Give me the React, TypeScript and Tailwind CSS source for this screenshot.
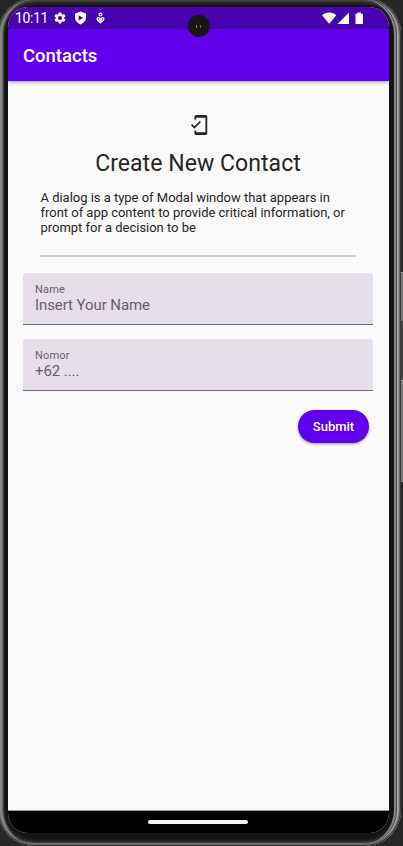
import React from "react";

function StatusBar() {
  return (
    <div className="flex h-[22px] shrink-0 items-center bg-[#4800b0] pl-[7px] pr-[25px] text-white">
      <span className="w-[33px] whitespace-nowrap text-[14px] leading-[22px] tracking-[-0.35px]">10:11</span>
      <svg className="ml-[5px]" width="14" height="14" viewBox="0 0 24 24" fill="currentColor">
        <path d="M19.14 12.94c.04-.3.06-.61.06-.94 0-.32-.02-.64-.07-.94l2.03-1.58a.49.49 0 0 0 .12-.61l-1.92-3.32a.49.49 0 0 0-.59-.22l-2.39.96c-.5-.38-1.03-.7-1.62-.94l-.36-2.54a.48.48 0 0 0-.48-.41h-3.84a.48.48 0 0 0-.47.41l-.36 2.54c-.59.24-1.13.57-1.62.94l-2.39-.96a.48.48 0 0 0-.59.22L2.74 8.87a.48.48 0 0 0 .12.61l2.03 1.58c-.05.3-.09.63-.09.94s.02.64.07.94l-2.03 1.58a.49.49 0 0 0-.12.61l1.92 3.32c.12.22.37.29.59.22l2.39-.96c.5.38 1.03.7 1.62.94l.36 2.54c.05.24.24.41.48.41h3.84c.24 0 .44-.17.47-.41l.36-2.54c.59-.24 1.13-.56 1.62-.94l2.39.96c.22.08.47 0 .59-.22l1.92-3.32a.48.48 0 0 0-.12-.61zM12 15.6A3.6 3.6 0 1 1 12 8.400a3.6 3.6 0 0 1 0 7.200z" />
      </svg>
      <svg className="ml-[7px]" width="13" height="14" viewBox="0 0 13 14">
        <path d="M6.500.5 12 2.600v4c0 3.300-2.400 5.800-5.500 6.900C3.400 12.400 1 9.900 1 6.600v-4z" fill="currentColor" />
        <path d="M4.600 4.300v5.200l4.500-2.600z" fill="#4800b0" />
      </svg>
      <svg className="ml-[9px]" width="9" height="12" viewBox="0 0 9 12" fill="none" stroke="currentColor" strokeWidth="1.2">
        <circle cx="4.500" cy="2.600" r="1.400" />
        <path d="M4.500 7C3.500 5.700 2.200 5.200 1.200 6.200c-.9 1.500 1 2.900 3.300 4.600 2.300-1.700 4.200-3.100 3.300-4.600C6.800 5.200 5.500 5.700 4.500 7zM2.700 7l1.800 1.800L6.300 7" />
      </svg>
      <svg className="ml-auto" width="42" height="13" viewBox="0 0 42 13" fill="currentColor">
        <path d="M0 3.200C4-.3 10.400-.3 14.300 3.200L7.200 11.800z" />
        <path d="M27 .500v11.500H15.500z" />
        <path d="M35.300.500h3.600v1.200h2v10.300h-7.400V1.700h1.800z" />
      </svg>
    </div>
  );
}

function FilledField({ label, value }: { label: string; value: string }) {
  return (
    <div className="flex h-[52px] flex-col rounded-t-[4px] border-b border-[#716b76] bg-[#e6deeb] pl-[12px] pt-[10px] text-[#66606a]">
      <span className="text-[11px] leading-[13px] tracking-[0.15px]">{label}</span>
      <span className="text-[15px] leading-[18px] tracking-[-0.08px]">{value}</span>
    </div>
  );
}

export default function App() {
  return (
    <div className="relative h-[846px] w-[403px] overflow-hidden bg-[#262626] font-[Roboto,sans-serif]">
      <div className="absolute left-[401px] top-[272px] h-[49px] w-[2px] border-t border-[#aaaaaa] bg-[#777777]" />
      <div className="absolute left-[401px] top-[321px] h-[59px] w-[2px] bg-[#444444]" />
      <div className="absolute left-[401px] top-[380px] h-[102px] w-[2px] border-t border-[#aaaaaa] bg-[#777777]" />
      <div className="-ml-[2px] -mt-[2px] h-[848px] w-[403px] rounded-[36px] bg-[#141414] pl-[10px] pr-[12px] pt-[9px] shadow-[inset_0_0_0_1px_#3a3a3a,inset_0_0_0_2px_#666666,inset_-3px_0_0_0_#999999,inset_-4px_0_0_0_#a6a6a6,inset_-5px_0_0_0_#484848,inset_-7px_0_0_0_#858585,inset_4px_0_0_0_#888888,inset_5px_0_0_0_#666666,inset_6px_0_0_0_#444444,inset_0_-3px_0_0_#707070,inset_0_0_5px_3px_#666666]">
        <div className="flex h-[826px] w-[381px] flex-col overflow-hidden rounded-[20px] bg-[#fafafa]">
          <StatusBar />
          <header className="relative z-10 flex h-[52px] shrink-0 items-center bg-[#6200ee] pl-[15px] pt-[2px] text-white shadow-[0_1px_4px_rgba(0,0,0,0.4)]">
            <h1 className="text-[18.5px] font-medium leading-[28px]">Contacts</h1>
          </header>
          <main className="flex flex-1 flex-col pl-[15px] pr-[16px] text-[#262626]">
            <svg className="ml-[164.5px] mt-[33px] shrink-0" width="22" height="22" viewBox="0 0 24 24" fill="currentColor">
              <path d="M19 1H9c-1.100 0-2 .9-2 2v3h2V4h10v16H9v-2H7v3c0 1.100.9 2 2 2h10c1.100 0 2-.9 2-2V3c0-1.100-.9-2-2-2zM7.010 13.470l-2.550-2.550-1.270 1.270L7 16l7.190-7.190-1.270-1.270z" />
            </svg>
            <h2 className="mt-[14px] whitespace-nowrap text-center text-[23px] leading-[28px] tracking-[0.06px]">Create New Contact</h2>
            <p className="ml-[17.5px] mt-[12px] whitespace-nowrap text-[13px] leading-[15px] tracking-[-0.02px]">
              A dialog is a type of Modal window that appears in<br />
              front of app content to provide critical information, or<br />
              prompt for a decision to be
            </p>
            <div className="ml-[17px] mr-[17px] mt-[20px] h-[2px] shrink-0 bg-[#cccccc]" />
            <div className="mt-[16px] flex flex-col gap-[14px]">
              <FilledField label="Name" value="Insert Your Name" />
              <FilledField label="Nomor" value="+62 ...." />
            </div>
            <button className="mr-[4px] mt-[19px] h-[33px] w-[71px] self-end rounded-full bg-[#6200ee] text-[13px] font-medium text-white shadow-[0_1px_3px_rgba(0,0,0,0.4)]">
              Submit
            </button>
          </main>
          <nav className="flex h-[23px] shrink-0 justify-center border-t border-[#999999] bg-black pr-[2px] pt-[9px]">
            <div className="h-[4px] w-[100px] rounded-full bg-[#f4f4f4]" />
          </nav>
        </div>
      </div>
      <div className="absolute left-[187.5px] top-[15px] z-20 flex h-[22px] w-[22px] items-center justify-center gap-[3px] rounded-full bg-[#161616]">
        <i className="h-[3px] w-px bg-[#8b8b50]" />
        <i className="h-[3px] w-px bg-[#a34838]" />
      </div>
    </div>
  );
}
